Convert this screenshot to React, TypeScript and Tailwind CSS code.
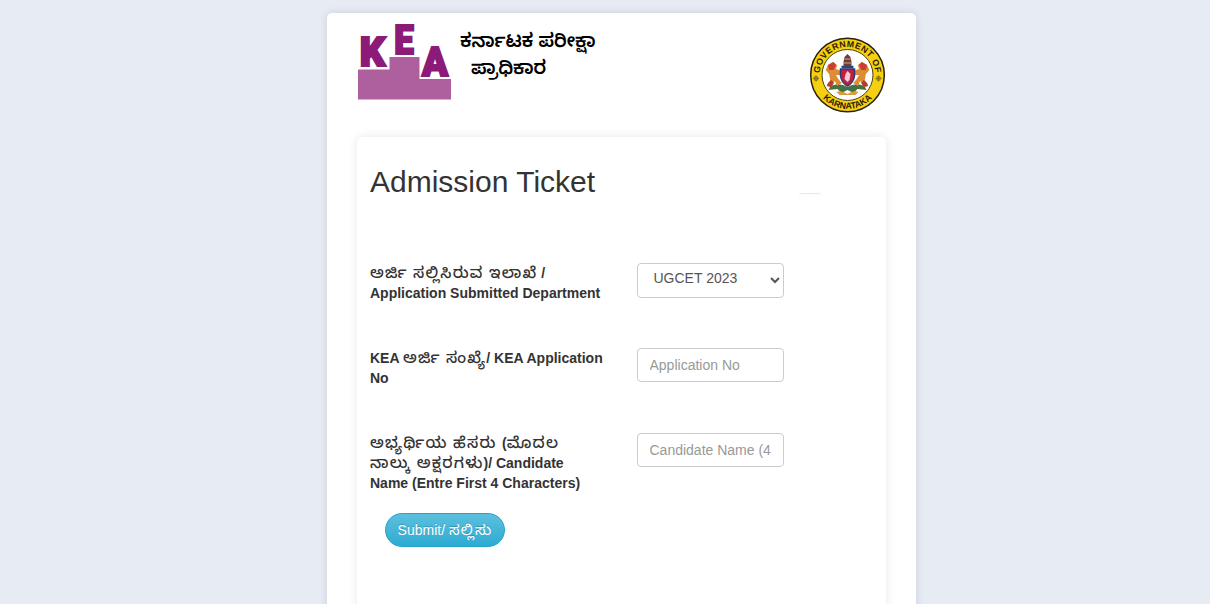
import React from "react";

function KeaLogo() {
  return (
    <svg className="block h-[78px] w-[95px] overflow-visible" viewBox="357 23 95 78" role="img" aria-label="KEA">
      <path d="M358 69.500H389.500V57H419.500V79H451V99.500H358Z" fill="#ae5f9d" />
      <g fill="#8c1a78" stroke="#8c1a78" strokeWidth="2.200" fontFamily="Roboto, sans-serif" fontWeight="900" fontSize="40.500">
        <text x="359.800" y="66" textLength="25.500" lengthAdjust="spacingAndGlyphs">K</text>
        <text x="394.300" y="54" textLength="19.500" lengthAdjust="spacingAndGlyphs">E</text>
        <text x="422" y="76" textLength="26" lengthAdjust="spacingAndGlyphs">A</text>
      </g>
    </svg>
  );
}

function Lion() {
  return (
    <>
      <path d="M-17-10L-13-13L-9-10L-10-6L-5-4L-5 0L-10 0L-8 4L-5 8L-9 11L-11 6L-14 12L-18 11L-15 5L-16-1L-19-5Z" fill="#dc8d35" />
      <path d="M-17-10L-12-13L-10-10L-12-5L-16-5Z" fill="#cb3e32" />
      <path d="M-17 8L-14 5L-12 8L-14 12L-18 11Z" fill="#bb3c2e" />
    </>
  );
}

function Emblem() {
  return (
    <svg className="block h-[78px] w-[78px]" viewBox="-39.500 -39 78 78" role="img" aria-label="Government of Karnataka">
      <defs>
        <path id="arcTop" d="M-27.500 3A27.700 27.700 0 1 1 27.500 3" />
        <path id="arcBottom" d="M-33.800 0A33.800 33.800 0 0 0 33.800 0" />
      </defs>
      <circle r="36.800" fill="#f6cf10" stroke="#26220c" strokeWidth="1.500" />
      <circle r="25.500" fill="#fff" stroke="#4c430e" strokeWidth="1" />
      <g fill="#282207" fontFamily="Liberation Sans, sans-serif" fontWeight="700">
        <text fontSize="8.800" letterSpacing="0.500"><textPath href="#arcTop" startOffset="50%" textAnchor="middle">GOVERNMENT OF</textPath></text>
        <text fontSize="8.800"><textPath href="#arcBottom" startOffset="50%" textAnchor="middle">KARNATAKA</textPath></text>
      </g>
      <g stroke="#8c7417" strokeWidth="1.200" fill="none">
        <path d="M-31.500 .5V6.500M-34.500 3.500H-28.500M31 .5V6.500M28 3.500H34" />
        <circle cx="-31.500" cy="3.500" r="1.800" />
        <circle cx="31" cy="3.500" r="1.800" />
      </g>
      <path d="M-17 11Q-8 7 0 12Q8 7 17 11L19 15L10 14L6 18L0 15L-6 18L-10 14L-19 15Z" fill="#47713f" />
      <path d="M-11 17Q-6 15 0 19Q6 15 11 17L8 20L0 20L-8 20Z" fill="#d89b44" />
      <g transform="scale(1.150 1)"><Lion /></g>
      <g transform="scale(-1.150 1)"><Lion /></g>
      <path d="M-7-6H7V1Q6 8 0 11Q-6 8-7 1Z" fill="#c51f40" stroke="#253c78" strokeWidth="1.500" />
      <path d="M-3 4L-2-1L0-4L3-1L2 5L0 7Z" fill="#f2ced4" />
      <path d="M-4-8V-13L-3-18L0-21L3-18L4-13V-8Z" fill="#703c33" />
      <path d="M-3-16H3M-4-12H4" stroke="#d1a48e" strokeWidth="1" />
      <path d="M-6-8H6" stroke="#28487c" strokeWidth="2.500" />
    </svg>
  );
}

function Kn({ children }: { children: React.ReactNode }) {
  return <span className="text-[15.5px] leading-none font-medium tracking-[1.2px]">{children}</span>;
}

const inputClass =
  "block h-[34px] w-[147px] rounded border border-[#ccc] bg-white pr-3 pl-[11.5px] text-[14px] leading-5 text-[#555] placeholder:text-[#999]";

export default function App() {
  return (
    <div className="h-[604px] overflow-hidden bg-[#e7ebf4] pt-[13px] font-['Liberation_Sans','Noto_Sans_Kannada',sans-serif] text-[14px] leading-5 text-[#333]">
      <main className="ml-[327px] h-[640px] w-[589px] rounded-[5px] bg-white px-[30px] shadow-[0_0_8px_rgba(0,0,0,0.12)]">
        <header className="flex h-[124px] items-start">
          <div className="mt-[10px]"><KeaLogo /></div>
          <div className="mt-[14px] ml-[8px] w-[145px] whitespace-nowrap text-[18.7px] leading-[27px] font-semibold text-black">
            <div>ಕರ್ನಾಟಕ ಪರೀಕ್ಷಾ</div>
            <div className="pl-[11px]">ಪ್ರಾಧಿಕಾರ</div>
          </div>
          <div className="mt-[23px] ml-auto"><Emblem /></div>
        </header>
        <section className="h-[520px] w-[529px] rounded-[5px] bg-white px-[13px] pt-[28px] shadow-[0_0_10px_rgba(0,0,0,0.1)]">
          <div className="flex h-[98px] items-start">
            <h1 className="w-[429px] text-[30px] leading-[33px]">Admission Ticket</h1>
            <div className="mt-[28px] h-[5px] w-[22px] rounded-sm border-t border-[#e8e8e8]" />
          </div>
          <form>
            <div className="flex h-[85px] items-start">
              <label htmlFor="dept" className="w-[267px] font-bold whitespace-nowrap"><Kn>ಅರ್ಜಿ ಸಲ್ಲಿಸಿರುವ ಇಲಾಖೆ</Kn> /<br />Application Submitted Department</label>
              <select id="dept" className="block h-[35px] w-[147px] rounded border border-[#ccc] bg-white pr-[12px] pb-[5px] pl-[11.5px] text-[14px] text-[#555]">
                <option>UGCET 2023</option>
              </select>
            </div>
            <div className="flex h-[85px] items-start">
              <label htmlFor="appno" className="w-[267px] font-bold whitespace-nowrap">KEA <Kn>ಅರ್ಜಿ ಸಂಖ್ಯೆ</Kn>/ KEA Application<br />No</label>
              <input id="appno" className={inputClass} placeholder="Application No" />
            </div>
            <div className="flex h-[80px] items-start">
              <label htmlFor="name" className="w-[267px] font-bold whitespace-nowrap"><span className="tracking-[0.1px]"><Kn>ಅಭ್ಯರ್ಥಿಯ ಹೆಸರು </Kn>(<Kn>ಮೊದಲ</Kn></span><br /><Kn>ನಾಲ್ಕು ಅಕ್ಷರಗಳು</Kn>)/ Candidate<br />Name (Entre First 4 Characters)</label>
              <input id="name" className={inputClass} placeholder="Candidate Name (4 Characters)" />
            </div>
            <button type="button" className="ml-[15px] h-[34px] w-[120px] rounded-full border border-[#28a4c9] bg-linear-to-b from-[#5bc0de] to-[#2aabd2] text-[14px] leading-5 whitespace-nowrap text-white [text-shadow:0_-1px_0_rgba(0,0,0,0.2)]">Submit/ <span className="text-[15px] leading-none tracking-[1.3px]">ಸಲ್ಲಿಸು</span></button>
          </form>
        </section>
      </main>
    </div>
  );
}
